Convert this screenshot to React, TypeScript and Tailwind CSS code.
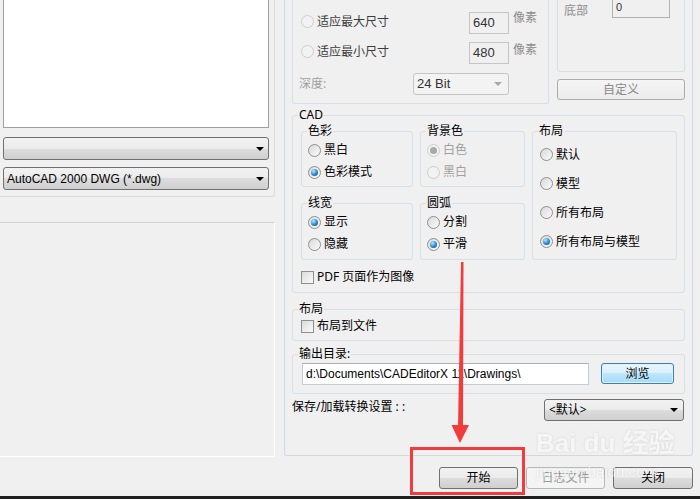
import React from 'react';

type Kids = { children?: React.ReactNode };

function Radio({ checked = false, disabled = false }: { checked?: boolean; disabled?: boolean }) {
  return (
    <span
      className={`w-[13px] h-[13px] rounded-full border flex items-center justify-center shrink-0 ${
        disabled ? 'border-[#cdcdcd] bg-[#f2f2f2]' : 'border-[#8e8f8f] bg-[linear-gradient(135deg,#d9d9d9,#fbfbfb)]'
      }`}
    >
      {checked && (
        <span
          className={`w-[7px] h-[7px] rounded-full ${
            disabled ? 'bg-[#a8a8a8]' : 'bg-[radial-gradient(circle_at_35%_30%,#b6e6ff,#2a86cc_55%,#0c4f8c)]'
          }`}
        />
      )}
    </span>
  );
}

function Check() {
  return <span className="w-[13px] h-[13px] border border-[#8e8f8f] bg-[linear-gradient(135deg,#dcdcdc,#fafafa)] shrink-0" />;
}

function Arrow({ light = false }: { light?: boolean }) {
  return (
    <span
      className={`w-0 h-0 border-l-[4px] border-r-[4px] border-t-[4px] border-l-transparent border-r-transparent ${
        light ? 'border-t-[#a8a8a8]' : 'border-t-black'
      }`}
    />
  );
}

function Group({ label, className = '', children }: Kids & { label?: string; className?: string }) {
  return (
    <div className={`border border-[#d5dfe5] rounded-[3px] ${className}`}>
      {label && <div className="-mt-[9px] ml-[5px] h-[16px] leading-[16px] w-fit px-[1px] bg-[#f0f0f0]">{label}</div>}
      {children}
    </div>
  );
}

function Opt({ label, checked, disabled }: { label: string; checked?: boolean; disabled?: boolean }) {
  return (
    <div className="flex items-center gap-[3px] h-[22px]">
      <Radio checked={checked} disabled={disabled} />
      <span className={disabled ? 'text-[#a0a0a0]' : 'text-black'}>{label}</span>
    </div>
  );
}

const latin = "font-['Liberation_Sans','Noto_Sans_CJK_SC',sans-serif]";

function Combo({ text }: { text?: string }) {
  return (
    <div className="ml-[3px] w-[266px] h-[23px] rounded-[3px] border border-[#707070] bg-[linear-gradient(#f2f2f2,#ebebeb_50%,#dddddd_50%,#cfcfcf)] flex items-center justify-between pl-[3px] pr-[4px]">
      <span className={`text-[12px] ${latin}`}>{text}</span>
      <Arrow />
    </div>
  );
}

function Btn({ label, disabled = false, className = '' }: { label: string; disabled?: boolean; className?: string }) {
  return (
    <div
      className={`h-[22px] rounded-[3px] border flex items-center justify-center ${
        disabled
          ? 'border-[#b5b9bc] bg-[#f4f4f4] text-[#9a9a9a]'
          : 'border-[#707070] bg-[linear-gradient(#f2f2f2,#ebebeb_50%,#dddddd_50%,#cfcfcf)] text-black'
      } ${className}`}
    >
      {label}
    </div>
  );
}

export default function App() {
  return (
    <div className="w-[700px] h-[499px] bg-[#f0f0f0] relative overflow-hidden flex flex-col text-[12px] text-black font-['Noto_Sans','Noto_Sans_CJK_SC',sans-serif]">
      <div className="flex h-[457px]">
        {/* Left column */}
        <div className="w-[284px] flex flex-col">
          <div className="w-[275px] h-[197px] border-r border-b border-[#dadada] rounded-br-[3px]">
            <div className="ml-[3px] w-[266px] h-[128px] bg-white border border-t-0 border-[#a0a0a0]" />
            <div className="mt-[9px]">
              <Combo />
            </div>
            <div className="mt-[7px]">
              <Combo text="AutoCAD 2000 DWG (*.dwg)" />
            </div>
          </div>
          <div className="mt-[25px] w-[275px] h-[235px] border-t border-t-[#d5d5d5] border-r border-b border-r-white border-b-white" />
        </div>

        {/* Right column */}
        <div className="w-[409px] h-[456px] border-l border-r border-b border-[#d0d9e0] rounded-b-[3px] px-[7px]">
          {/* Top section */}
          <div className="flex gap-[8px]">
            <div className="w-[257px] h-[104px] border border-t-0 border-[#d5dfe5] rounded-b-[3px]">
              <div className="flex items-start mt-[12px] h-[22px]">
                <div className="w-[176px] h-[19px] flex items-center gap-[3px] pl-[8px] text-[#3c3c3c]">
                  <Radio disabled />
                  <span>适应最大尺寸</span>
                </div>
                <div className={`w-[40px] h-[22px] border border-[#c5c5c5] bg-[#f0f0f0] flex items-end pl-[3px] pb-[1px] text-[13px] text-[#333] ${latin}`}>640</div>
                <span className="ml-[4px] -mt-[2px] leading-[16px] text-[#8d8d8d]">像素</span>
              </div>
              <div className="flex items-start mt-[8px] h-[22px]">
                <div className="w-[176px] h-[19px] flex items-center gap-[3px] pl-[8px] text-[#3c3c3c]">
                  <Radio disabled />
                  <span>适应最小尺寸</span>
                </div>
                <div className={`w-[40px] h-[22px] border border-[#c5c5c5] bg-[#f0f0f0] flex items-end pl-[3px] pb-[1px] text-[13px] text-[#333] ${latin}`}>480</div>
                <span className="ml-[4px] leading-[16px] text-[#8d8d8d]">像素</span>
              </div>
              <div className="flex items-center mt-[9px] h-[22px]">
                <div className="w-[120px] pl-[6px] text-[#a0a0a0]">深度:</div>
                <div className="w-[96px] h-[22px] rounded-[3px] border border-[#c5c5c5] bg-[#f3f3f3] flex items-center justify-between pl-[3px] pr-[6px]">
                  <span className={`text-[13px] text-[#333] ${latin}`}>24 Bit</span>
                  <Arrow light />
                </div>
              </div>
            </div>
            <div className="w-[128px]">
              <div className="h-[72px] border border-t-0 border-[#d5dfe5] rounded-b-[3px] flex items-start">
                <div className="w-[54px] pl-[6px] mt-[3px] leading-[16px] text-[#8d8d8d]">底部</div>
                <div className={`w-[58px] h-[18px] border border-t-0 border-[#b0b0b0] bg-[#f0f0f0] pl-[3px] pt-[1px] leading-[12px] text-[11px] text-[#333] ${latin}`}>0</div>
              </div>
              <div className="mt-[7px] h-[21px] rounded-[3px] border border-[#acacac] bg-[linear-gradient(#f5f5f5,#ececec)] text-[#8a8a8a] flex items-center justify-center">
                自定义
              </div>
            </div>
          </div>

          {/* CAD group */}
          <Group label="CAD" className="mt-[11px] h-[178px]">
            <div className="mt-[8px] pl-[8px] grid grid-cols-[112px_105px_145px] grid-rows-[56px_57px] gap-x-[7px] gap-y-[16px]">
              <Group label="色彩">
                <div className="pl-[6px]">
                  <Opt label="黑白" />
                  <Opt label="色彩模式" checked />
                </div>
              </Group>
              <Group label="背景色">
                <div className="pl-[6px]">
                  <Opt label="白色" checked disabled />
                  <Opt label="黑白" disabled />
                </div>
              </Group>
              <Group label="布局" className="row-span-2">
                <div className="pt-[1px] pl-[7px]">
                  <div className="h-[29px] flex items-center gap-[3px]"><Radio /><span>默认</span></div>
                  <div className="h-[29px] flex items-center gap-[3px]"><Radio /><span>模型</span></div>
                  <div className="h-[29px] flex items-center gap-[3px]"><Radio /><span>所有布局</span></div>
                  <div className="h-[29px] flex items-center gap-[3px]"><Radio checked /><span>所有布局与模型</span></div>
                </div>
              </Group>
              <Group label="线宽">
                <div className="pl-[6px]">
                  <Opt label="显示" checked />
                  <Opt label="隐藏" />
                </div>
              </Group>
              <Group label="圆弧">
                <div className="pl-[6px]">
                  <Opt label="分割" />
                  <Opt label="平滑" checked />
                </div>
              </Group>
            </div>
            <div className="mt-[9px] h-[16px] pl-[8px] flex items-center gap-[3px]">
              <Check />
              <span>PDF 页面作为图像</span>
            </div>
          </Group>

          {/* Layout group */}
          <Group label="布局" className="mt-[16px] h-[32px]">
            <div className="mt-[1px] h-[16px] pl-[8px] flex items-center gap-[3px]">
              <Check />
              <span>布局到文件</span>
            </div>
          </Group>

          {/* Output folder */}
          <Group label="输出目录:" className="mt-[13px] h-[40px]">
            <div className="mt-[1px] pl-[9px] flex items-start gap-[12px]">
              <div className={`w-[287px] h-[22px] bg-white border border-[#c3ccd4] border-t-[#abadb3] flex items-center pl-[3px] text-[12px] ${latin}`}>
                {'d:\\Documents\\CADEditorX 11\\Drawings\\'}
              </div>
              <div className="w-[73px] h-[21px] rounded-[3px] border border-[#3c7fb1] bg-[linear-gradient(#eaf6fd,#d9f0fc_50%,#bee6fd_50%,#a7d9f5)] flex items-center justify-center shadow-[inset_0_0_0_1px_#dff2fc]">
                浏览
              </div>
            </div>
          </Group>

          {/* Save/load */}
          <div className="mt-[5px] flex justify-between items-start">
            <span className="leading-[16px]">保存/加载转换设置 : :</span>
            <div className="mr-[1px] w-[140px] h-[22px] rounded-[3px] border border-[#707070] bg-[linear-gradient(#f2f2f2,#ebebeb_50%,#dddddd_50%,#cfcfcf)] flex items-center justify-between pl-[4px] pr-[5px]">
              <span>&lt;默认&gt;</span>
              <Arrow />
            </div>
          </div>
        </div>
      </div>

      {/* Bottom buttons */}
      <div className="mt-[10px] flex justify-end gap-[8px] pr-[7px]">
        <Btn label="开始" className="w-[79px]" />
        <Btn label="日志文件" disabled className="w-[79px]" />
        <Btn label="关闭" className="w-[80px]" />
      </div>
      <div className="mt-[7px] h-[3px] bg-[#1f1f1f]" />

      {/* Watermark */}
      <div className="absolute left-[536px] top-[428px] flex flex-col items-start pointer-events-none select-none opacity-60 drop-shadow-[0_0_1px_rgba(0,0,0,0.2)]">
        <span className="text-[26px] font-bold leading-[30px] text-[#fafafa] font-['Liberation_Sans','Noto_Sans_CJK_SC',sans-serif]">Bai du 经验</span>
        <span className="mt-[6px] text-[15px] leading-[16px] text-[#fafafa] font-['Liberation_Sans',sans-serif]">jingyan.baidu.com</span>
      </div>

      {/* Annotation: red box + arrow */}
      <div className="absolute left-[410px] top-[447px] w-[115px] h-[48px] border-[3px] border-[#f03c3c] pointer-events-none" />
      <svg className="absolute left-[448px] top-[258px] pointer-events-none" width="26" height="190" viewBox="0 0 26 190">
        <polygon points="13,4 15.5,4 15,169 10,169" fill="#f23b3b" />
        <polygon points="3.5,167 21,167 12,185" fill="#f23b3b" />
      </svg>
    </div>
  );
}
